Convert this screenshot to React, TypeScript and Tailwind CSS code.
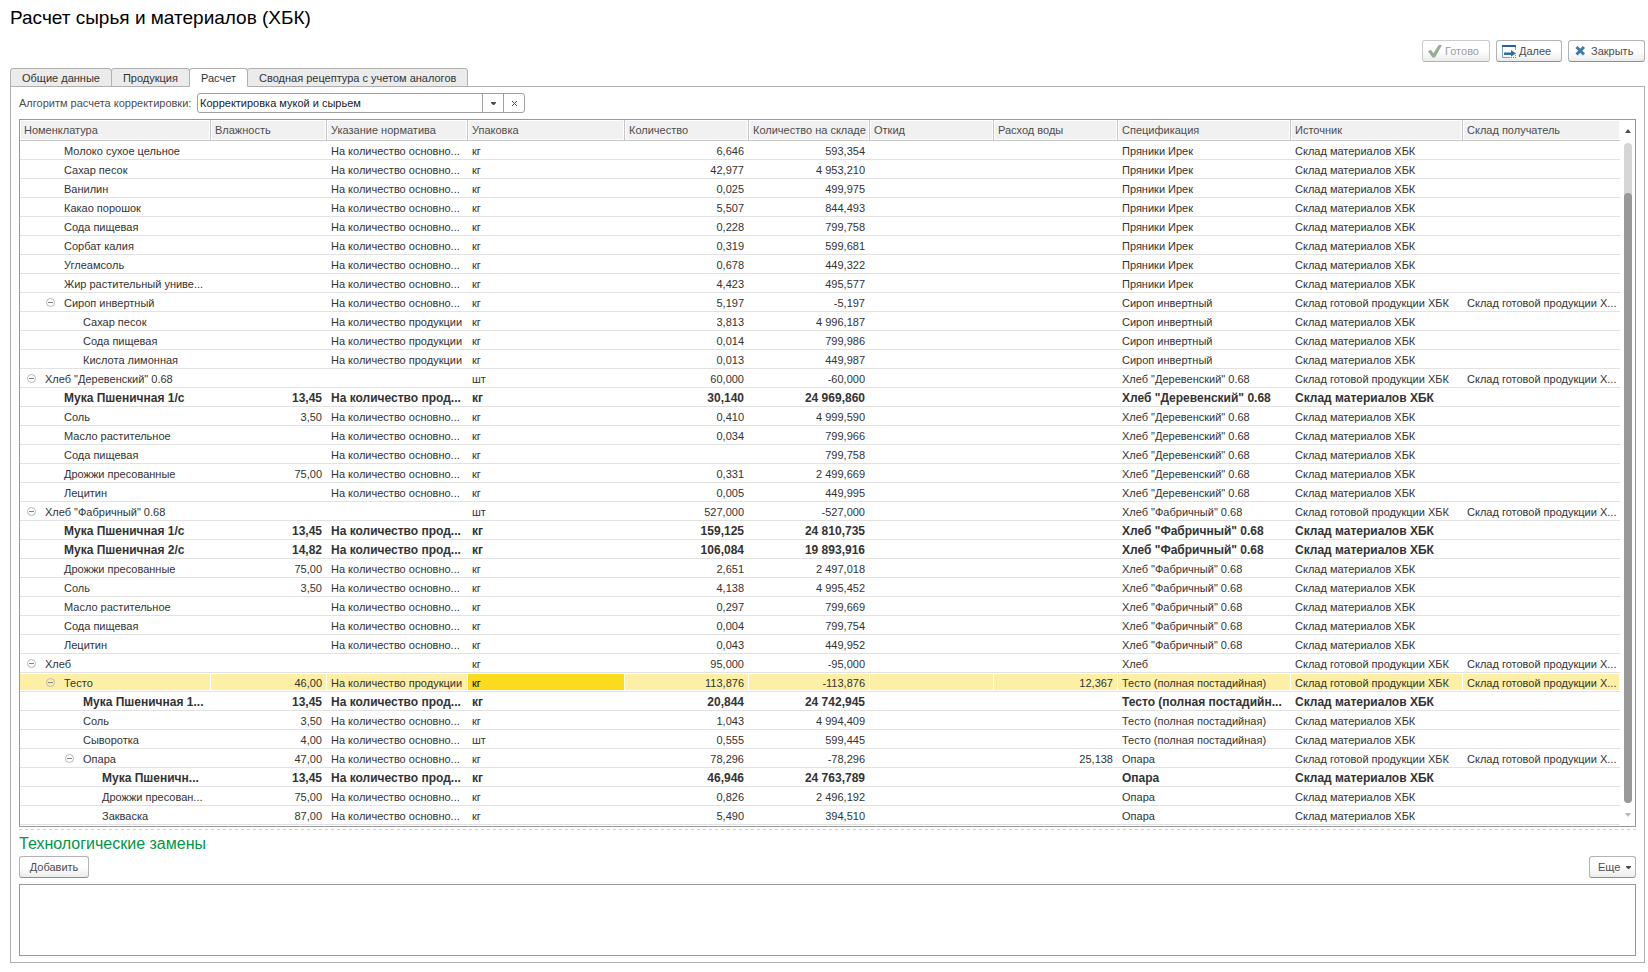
import React from 'react';

type Row = {
    level: number;
    name: string;
    group?: boolean;
    bold?: boolean;
    selected?: boolean;
    moisture?: string;
    norm?: string;
    unit: string;
    qty?: string;
    stock: string;
    water?: string;
    spec: string;
    source: string;
    target?: string;
};

const NORM_BASE = 'На количество основно...';
const NORM_PROD = 'На количество продукции';
const NORM_PROD_CUT = 'На количество прод...';
const MATERIALS = 'Склад материалов ХБК';
const FINISHED = 'Склад готовой продукции ХБК';
const FINISHED_CUT = 'Склад готовой продукции Х...';
const SPEC_IREK = 'Пряники Ирек';
const SPEC_SYRUP = 'Сироп инвертный';
const SPEC_VILLAGE = 'Хлеб "Деревенский" 0.68';
const SPEC_FACTORY = 'Хлеб "Фабричный" 0.68';
const SPEC_DOUGH = 'Тесто (полная постадийная)';

const rows: Row[] = [
    { level: 1, name: 'Молоко сухое цельное', norm: NORM_BASE, unit: 'кг', qty: '6,646', stock: '593,354', spec: SPEC_IREK, source: MATERIALS },
    { level: 1, name: 'Сахар песок', norm: NORM_BASE, unit: 'кг', qty: '42,977', stock: '4 953,210', spec: SPEC_IREK, source: MATERIALS },
    { level: 1, name: 'Ванилин', norm: NORM_BASE, unit: 'кг', qty: '0,025', stock: '499,975', spec: SPEC_IREK, source: MATERIALS },
    { level: 1, name: 'Какао порошок', norm: NORM_BASE, unit: 'кг', qty: '5,507', stock: '844,493', spec: SPEC_IREK, source: MATERIALS },
    { level: 1, name: 'Сода пищевая', norm: NORM_BASE, unit: 'кг', qty: '0,228', stock: '799,758', spec: SPEC_IREK, source: MATERIALS },
    { level: 1, name: 'Сорбат калия', norm: NORM_BASE, unit: 'кг', qty: '0,319', stock: '599,681', spec: SPEC_IREK, source: MATERIALS },
    { level: 1, name: 'Углеамсоль', norm: NORM_BASE, unit: 'кг', qty: '0,678', stock: '449,322', spec: SPEC_IREK, source: MATERIALS },
    { level: 1, name: 'Жир растительный униве...', norm: NORM_BASE, unit: 'кг', qty: '4,423', stock: '495,577', spec: SPEC_IREK, source: MATERIALS },
    { level: 1, group: true, name: 'Сироп инвертный', norm: NORM_BASE, unit: 'кг', qty: '5,197', stock: '-5,197', spec: SPEC_SYRUP, source: FINISHED, target: FINISHED_CUT },
    { level: 2, name: 'Сахар песок', norm: NORM_PROD, unit: 'кг', qty: '3,813', stock: '4 996,187', spec: SPEC_SYRUP, source: MATERIALS },
    { level: 2, name: 'Сода пищевая', norm: NORM_PROD, unit: 'кг', qty: '0,014', stock: '799,986', spec: SPEC_SYRUP, source: MATERIALS },
    { level: 2, name: 'Кислота лимонная', norm: NORM_PROD, unit: 'кг', qty: '0,013', stock: '449,987', spec: SPEC_SYRUP, source: MATERIALS },
    { level: 0, group: true, name: 'Хлеб "Деревенский" 0.68', unit: 'шт', qty: '60,000', stock: '-60,000', spec: SPEC_VILLAGE, source: FINISHED, target: FINISHED_CUT },
    { level: 1, bold: true, name: 'Мука Пшеничная 1/с', moisture: '13,45', norm: NORM_PROD_CUT, unit: 'кг', qty: '30,140', stock: '24 969,860', spec: SPEC_VILLAGE, source: MATERIALS },
    { level: 1, name: 'Соль', moisture: '3,50', norm: NORM_BASE, unit: 'кг', qty: '0,410', stock: '4 999,590', spec: SPEC_VILLAGE, source: MATERIALS },
    { level: 1, name: 'Масло растительное', norm: NORM_BASE, unit: 'кг', qty: '0,034', stock: '799,966', spec: SPEC_VILLAGE, source: MATERIALS },
    { level: 1, name: 'Сода пищевая', norm: NORM_BASE, unit: 'кг', stock: '799,758', spec: SPEC_VILLAGE, source: MATERIALS },
    { level: 1, name: 'Дрожжи пресованные', moisture: '75,00', norm: NORM_BASE, unit: 'кг', qty: '0,331', stock: '2 499,669', spec: SPEC_VILLAGE, source: MATERIALS },
    { level: 1, name: 'Лецитин', norm: NORM_BASE, unit: 'кг', qty: '0,005', stock: '449,995', spec: SPEC_VILLAGE, source: MATERIALS },
    { level: 0, group: true, name: 'Хлеб "Фабричный" 0.68', unit: 'шт', qty: '527,000', stock: '-527,000', spec: SPEC_FACTORY, source: FINISHED, target: FINISHED_CUT },
    { level: 1, bold: true, name: 'Мука Пшеничная 1/с', moisture: '13,45', norm: NORM_PROD_CUT, unit: 'кг', qty: '159,125', stock: '24 810,735', spec: SPEC_FACTORY, source: MATERIALS },
    { level: 1, bold: true, name: 'Мука Пшеничная 2/с', moisture: '14,82', norm: NORM_PROD_CUT, unit: 'кг', qty: '106,084', stock: '19 893,916', spec: SPEC_FACTORY, source: MATERIALS },
    { level: 1, name: 'Дрожжи пресованные', moisture: '75,00', norm: NORM_BASE, unit: 'кг', qty: '2,651', stock: '2 497,018', spec: SPEC_FACTORY, source: MATERIALS },
    { level: 1, name: 'Соль', moisture: '3,50', norm: NORM_BASE, unit: 'кг', qty: '4,138', stock: '4 995,452', spec: SPEC_FACTORY, source: MATERIALS },
    { level: 1, name: 'Масло растительное', norm: NORM_BASE, unit: 'кг', qty: '0,297', stock: '799,669', spec: SPEC_FACTORY, source: MATERIALS },
    { level: 1, name: 'Сода пищевая', norm: NORM_BASE, unit: 'кг', qty: '0,004', stock: '799,754', spec: SPEC_FACTORY, source: MATERIALS },
    { level: 1, name: 'Лецитин', norm: NORM_BASE, unit: 'кг', qty: '0,043', stock: '449,952', spec: SPEC_FACTORY, source: MATERIALS },
    { level: 0, group: true, name: 'Хлеб', unit: 'кг', qty: '95,000', stock: '-95,000', spec: 'Хлеб', source: FINISHED, target: FINISHED_CUT },
    { level: 1, group: true, selected: true, name: 'Тесто', moisture: '46,00', norm: NORM_PROD, unit: 'кг', qty: '113,876', stock: '-113,876', water: '12,367', spec: SPEC_DOUGH, source: FINISHED, target: FINISHED_CUT },
    { level: 2, bold: true, name: 'Мука Пшеничная 1...', moisture: '13,45', norm: NORM_PROD_CUT, unit: 'кг', qty: '20,844', stock: '24 742,945', spec: 'Тесто (полная постадийн...', source: MATERIALS },
    { level: 2, name: 'Соль', moisture: '3,50', norm: NORM_BASE, unit: 'кг', qty: '1,043', stock: '4 994,409', spec: SPEC_DOUGH, source: MATERIALS },
    { level: 2, name: 'Сыворотка', moisture: '4,00', norm: NORM_BASE, unit: 'шт', qty: '0,555', stock: '599,445', spec: SPEC_DOUGH, source: MATERIALS },
    { level: 2, group: true, name: 'Опара', moisture: '47,00', norm: NORM_BASE, unit: 'кг', qty: '78,296', stock: '-78,296', water: '25,138', spec: 'Опара', source: FINISHED, target: FINISHED_CUT },
    { level: 3, bold: true, name: 'Мука Пшеничн...', moisture: '13,45', norm: NORM_PROD_CUT, unit: 'кг', qty: '46,946', stock: '24 763,789', spec: 'Опара', source: MATERIALS },
    { level: 3, name: 'Дрожжи пресован...', moisture: '75,00', norm: NORM_BASE, unit: 'кг', qty: '0,826', stock: '2 496,192', spec: 'Опара', source: MATERIALS },
    { level: 3, name: 'Закваска', moisture: '87,00', norm: NORM_BASE, unit: 'кг', qty: '5,490', stock: '394,510', spec: 'Опара', source: MATERIALS },
];

const columns = [
    { title: 'Номенклатура', width: 'w-[191px]' },
    { title: 'Влажность', width: 'w-[116px]' },
    { title: 'Указание норматива', width: 'w-[141px]' },
    { title: 'Упаковка', width: 'w-[157px]' },
    { title: 'Количество', width: 'w-[124px]' },
    { title: 'Количество на складе', width: 'w-[121px]' },
    { title: 'Откид', width: 'w-[124px]' },
    { title: 'Расход воды', width: 'w-[124px]' },
    { title: 'Спецификация', width: 'w-[173px]' },
    { title: 'Источник', width: 'w-[172px]' },
    { title: 'Склад получатель', width: '' },
];

const indents = ['pl-[6px]', 'pl-[25px]', 'pl-[44px]', 'pl-[63px]'];

const tabs = ['Общие данные', 'Продукция', 'Расчет', 'Сводная рецептура с учетом аналогов'];

const Triangle: React.FC<{ up?: boolean; className?: string }> = ({ up, className }) => (
    <svg width="6" height="4" viewBox="0 0 6 4" className={className} aria-hidden="true">
        <path d={up ? 'M0 4L3 0L6 4Z' : 'M0 0L3 4L6 0Z'} fill="currentColor" />
    </svg>
);

const DropArrow = () => (
    <svg width="5" height="3" viewBox="0 0 5 3" aria-hidden="true">
        <path d="M0 0H5V1L3 3H2L0 1Z" fill="currentColor" />
    </svg>
);

const CheckIcon = () => (
    <svg width="16" height="16" viewBox="0 0 16 16" aria-hidden="true">
        <path d="M1 8.2L4 6.8L6.3 10.2L11.8 2H15L8 14.5H5.5Z" fill="#97ac97" />
    </svg>
);

const NextIcon = () => (
    <svg width="16" height="16" viewBox="0 0 16 16" aria-hidden="true">
        <path d="M1.5 4V14.5H9M14.5 4V7" fill="none" stroke="#7ba3bf" />
        <path d="M1 2H15V4H1Z" fill="#2b6390" />
        <path d="M3 9.5H10V7L15 10.5L10 13.5V12H3Z" fill="#2f7096" />
        <path d="M10 14.5H15M14.5 12V14" fill="none" stroke="#5b8db0" strokeDasharray="1 1" />
    </svg>
);

const CrossIcon = () => (
    <svg width="16" height="16" viewBox="0 0 16 16" aria-hidden="true">
        <path d="M3.5 4L11 11.5M11 4L3.5 11.5" stroke="#3d7ba6" strokeWidth="3" />
    </svg>
);

const Button: React.FC<React.ButtonHTMLAttributes<HTMLButtonElement>> = ({ className = '', children, ...rest }) => (
    <button
        type="button"
        className={`flex h-[22px] items-center rounded-[3px] border border-[#b3b3b3] border-b-[#8f8f8f] bg-linear-to-b from-white from-50% to-[#ebebeb] text-[#4d4d4d] disabled:border-[#cccccc] disabled:border-b-[#b3b3b3] disabled:text-[#9c9c9c] ${className}`}
        {...rest}
    >
        {children}
    </button>
);

const Cell: React.FC<{ row: Row; current?: boolean; right?: boolean; children?: React.ReactNode }> = ({ row, current, right, children }) => {
    const fill = row.selected ? (current ? 'bg-[#fcdb1f] text-black' : 'bg-[#fdf0a6]') : '';
    return (
        <td className="border-b border-[#e2e2e2] p-0">
            <div className={`my-px mr-px h-4 overflow-hidden pl-1 leading-[18px] whitespace-nowrap ${right ? 'pr-1 text-right' : ''} ${fill}`}>
                {children}
            </div>
        </td>
    );
};

const TableRow: React.FC<{ row: Row }> = ({ row }) => (
    <tr className={row.bold ? 'text-[12px] font-bold' : ''}>
        <td className="border-b border-[#e2e2e2] p-0">
            <div className={`my-px mr-px flex h-4 leading-[18px] whitespace-nowrap ${indents[row.level]} ${row.selected ? 'bg-[#fdf0a6]' : ''}`}>
                <span className="flex w-[19px] items-center">
                    {row.group && (
                        <button type="button" aria-label="Свернуть" className="text-[#808080]">
                            <svg width="11" height="11" viewBox="0 0 11 11" fill="none" stroke="currentColor" aria-hidden="true">
                                <circle cx="5.5" cy="5.5" r="4" stroke="#b8b8b8" />
                                <path d="M3 5.5H8" />
                            </svg>
                        </button>
                    )}
                </span>
                {row.name}
            </div>
        </td>
        <Cell row={row} right>{row.moisture}</Cell>
        <Cell row={row}>{row.norm}</Cell>
        <Cell row={row} current>{row.unit}</Cell>
        <Cell row={row} right>{row.qty}</Cell>
        <Cell row={row} right>{row.stock}</Cell>
        <Cell row={row} />
        <Cell row={row} right>{row.water}</Cell>
        <Cell row={row}>{row.spec}</Cell>
        <Cell row={row}>{row.source}</Cell>
        <Cell row={row}>{row.target}</Cell>
    </tr>
);

export default function App() {
    return (
        <div className="min-h-screen bg-white pr-[3px] pb-2 pl-[10px] font-['Liberation_Sans',Arial,sans-serif] text-[11px] leading-4 text-[#333333]">
            <h1 className="pt-1.5 text-[19px] leading-6 text-black">Расчет сырья и материалов (ХБК)</h1>

            <div className="mt-2.5 flex justify-end gap-1.5">
                <Button disabled className="w-[68px] gap-0.5 pl-1">
                    <CheckIcon />
                    Готово
                </Button>
                <Button className="w-[66px] gap-0.5 pl-1">
                    <NextIcon />
                    Далее
                </Button>
                <Button className="w-[77px] gap-0.5 pl-1">
                    <CrossIcon />
                    Закрыть
                </Button>
            </div>

            <div role="tablist" className="relative mt-1.5 flex h-[19px] items-stretch">
                {tabs.map((tab, i) => (
                    <button
                        key={tab}
                        type="button"
                        role="tab"
                        aria-selected={i === 2}
                        className={`-mr-px rounded-t-[3px] border border-[#b0b0b0] px-[11px] ${i === 2 ? 'z-10 border-b-white bg-white' : 'bg-[#ebebeb]'}`}
                    >
                        {tab}
                    </button>
                ))}
            </div>

            <main className="-mt-px border border-[#b0b0b0] px-2 pt-1.5 pb-1.5">
                <div className="flex items-center">
                    <label htmlFor="algorithm" className="w-[178px] whitespace-nowrap text-[#4d4d4d]">Алгоритм расчета корректировки:</label>
                    <div className="flex h-5 w-[328px] rounded-[3px] border border-[#a0a0a0] text-[#4d4d4d]">
                        <select id="algorithm" className="min-w-0 flex-1 appearance-none pl-0.5 text-[#222222]">
                            <option>Корректировка мукой и сырьем</option>
                        </select>
                        <span className="flex w-[21px] items-center justify-center border-l border-[#a0a0a0]">
                            <DropArrow />
                        </span>
                        <button type="button" aria-label="Очистить" className="flex w-[21px] items-center justify-center border-l border-[#a0a0a0]">
                            <svg width="7" height="7" viewBox="0 0 7 7" stroke="currentColor" aria-hidden="true">
                                <path d="M1 1L6 6M6 1L1 6" />
                            </svg>
                        </button>
                    </div>
                </div>

                <div className="mt-1.5 flex border border-[#999999] pb-px">
                    <div className="min-w-0 flex-1">
                        <table className="w-full table-fixed border-separate border-spacing-0">
                            <thead>
                                <tr>
                                    {columns.map((column, i) => (
                                        <th
                                            key={column.title}
                                            className={`h-[21px] border-b border-[#c6c6c6] p-0 text-left font-normal text-[#4d4d4d] ${column.width} ${i < columns.length - 1 ? 'border-r' : ''}`}
                                        >
                                            <div className="m-px h-[18px] overflow-hidden bg-[#f1f1f1] pl-[3px] leading-[18px] whitespace-nowrap">{column.title}</div>
                                        </th>
                                    ))}
                                </tr>
                            </thead>
                            <tbody>
                                {rows.map((row, i) => (
                                    <TableRow key={i} row={row} />
                                ))}
                            </tbody>
                        </table>
                    </div>
                    <div className="flex w-[15px] flex-col items-center text-[#4d4d4d]">
                        <Triangle up className="mt-[9px]" />
                        <div className="mt-2.5 flex w-2 flex-1 flex-col rounded-full bg-[#d6d6d6] pt-[50px]">
                            <div className="flex-1 rounded-full bg-[#999999]" />
                        </div>
                        <Triangle className="mt-2.5 mb-2 text-[#b8b8b8]" />
                    </div>
                </div>

                <div className="mt-0.5 h-px bg-[repeating-linear-gradient(90deg,#cfcfcf_0_3px,transparent_3px_6px)]" />
                <h2 className="mt-1 text-[16px] leading-5 text-[#009646]">Технологические замены</h2>
                <div className="mt-0.5 flex justify-between">
                    <Button className="w-[70px] justify-center">Добавить</Button>
                    <Button className="w-[47px] justify-between pr-1 pl-2">
                        Еще
                        <DropArrow />
                    </Button>
                </div>
                <div className="mt-1.5 h-[72px] border border-[#999999]" />
            </main>
        </div>
    );
}
